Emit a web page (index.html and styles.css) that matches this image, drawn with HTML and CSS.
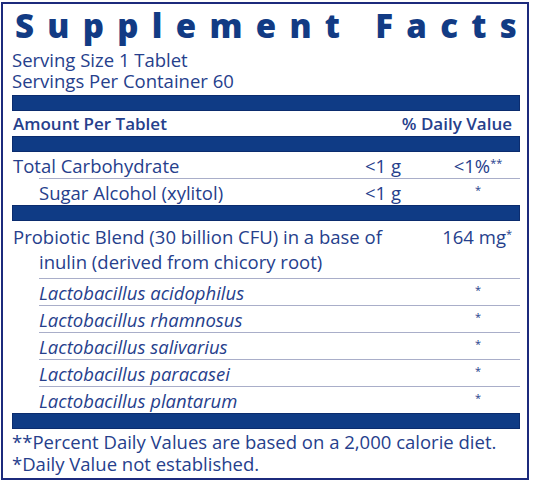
FILE: index.html
```html
<!DOCTYPE html>
<html>

<head>
    <meta charset="utf-8">
    <title>Supplement Facts</title>
    <link rel="stylesheet" href="styles.css">
</head>

<body>
    <div class="facts">
        <h1 class="facts-title">Supplement Facts</h1>
        <div class="serving">
            <div>Serving Size 1 Tablet</div>
            <div>Servings Per Container 60</div>
        </div>
        <div class="bar"></div>
        <div class="row head">
            <span class="name">Amount Per Tablet</span>
            <span class="dv">% Daily Value</span>
        </div>
        <div class="bar"></div>
        <div class="row">
            <span class="name">Total Carbohydrate</span>
            <span class="amt">&lt;1 g</span>
            <span class="dv">&lt;1%<sup>**</sup></span>
        </div>
        <div class="row sub">
            <span class="name">Sugar Alcohol (xylitol)</span>
            <span class="amt">&lt;1 g</span>
            <span class="dv"><sup>*</sup></span>
        </div>
        <div class="bar"></div>
        <div class="row blend">
            <span class="name">Probiotic Blend (30 billion CFU) in a base of<br>inulin (derived from chicory root)</span>
            <span class="total">164 mg<sup>*</sup></span>
        </div>
        <div class="row sub strain">
            <span class="name">Lactobacillus acidophilus</span>
            <span class="dv"><sup>*</sup></span>
        </div>
        <div class="row sub strain">
            <span class="name">Lactobacillus rhamnosus</span>
            <span class="dv"><sup>*</sup></span>
        </div>
        <div class="row sub strain">
            <span class="name">Lactobacillus salivarius</span>
            <span class="dv"><sup>*</sup></span>
        </div>
        <div class="row sub strain">
            <span class="name">Lactobacillus paracasei</span>
            <span class="dv"><sup>*</sup></span>
        </div>
        <div class="row sub strain">
            <span class="name">Lactobacillus plantarum</span>
            <span class="dv"><sup>*</sup></span>
        </div>
        <div class="bar"></div>
        <div class="notes">
            <div>**Percent Daily Values are based on a 2,000 calorie diet.</div>
            <div>*Daily Value not established.</div>
        </div>
    </div>
</body>

</html>
```

FILE: styles.css
```css
body {
    margin: 2px 0 0 1px;
    background: #fff;
}

.facts {
    width: 508px;
    height: 474px;
    border: 2px solid #1c2a7c;
    padding: 0 7px 0 9px;
    font-family: "Open Sans", "Noto Sans", sans-serif;
    font-size: 18.5px;
    color: #26408c;
    overflow: hidden;
}

.facts-title {
    margin: 0;
    padding: 0 0 0 3px;
    height: 43px;
    font-size: 33px;
    font-weight: 800;
    letter-spacing: 13.3px;
    line-height: 44px;
    color: #123b84;
    white-space: nowrap;
}

.serving {
    line-height: 21px;
    padding: 2px 0 4px;
}

.bar {
    height: 16px;
    background-color: #0f3b85;
    box-shadow: inset 0 0 0 1px #0b2c6e;
}

.row {
    display: flex;
    align-items: center;
    height: 26px;
}

.row .name {
    flex: 1;
    padding-left: 1px;
}

.row .amt {
    text-align: right;
}

.row .dv {
    width: 84px;
    padding-left: 35px;
    text-align: center;
}

.head {
    height: 25px;
    font-weight: 600;
    font-size: 17px;
}

.head .dv {
    width: auto;
    padding: 0 8px 0 0;
    text-align: right;
}

.sub {
    margin-left: 27px;
    border-top: 1px solid #a9aec9;
}

.sub .name {
    padding-left: 0;
}

.sub.strain .name {
    font-style: italic;
}

.sub.strain .dv {
    padding-left: 40px;
}

.blend {
    height: auto;
    align-items: flex-start;
    padding: 3px 0 4px;
    line-height: 25px;
}

.blend .name {
    padding-left: 27px;
    text-indent: -26px;
}

.blend .total {
    padding-right: 8px;
}

sup {
    font-size: 11px;
    line-height: 0;
    vertical-align: 6px;
}

.notes {
    padding-top: 2px;
    line-height: 22px;
}
```
